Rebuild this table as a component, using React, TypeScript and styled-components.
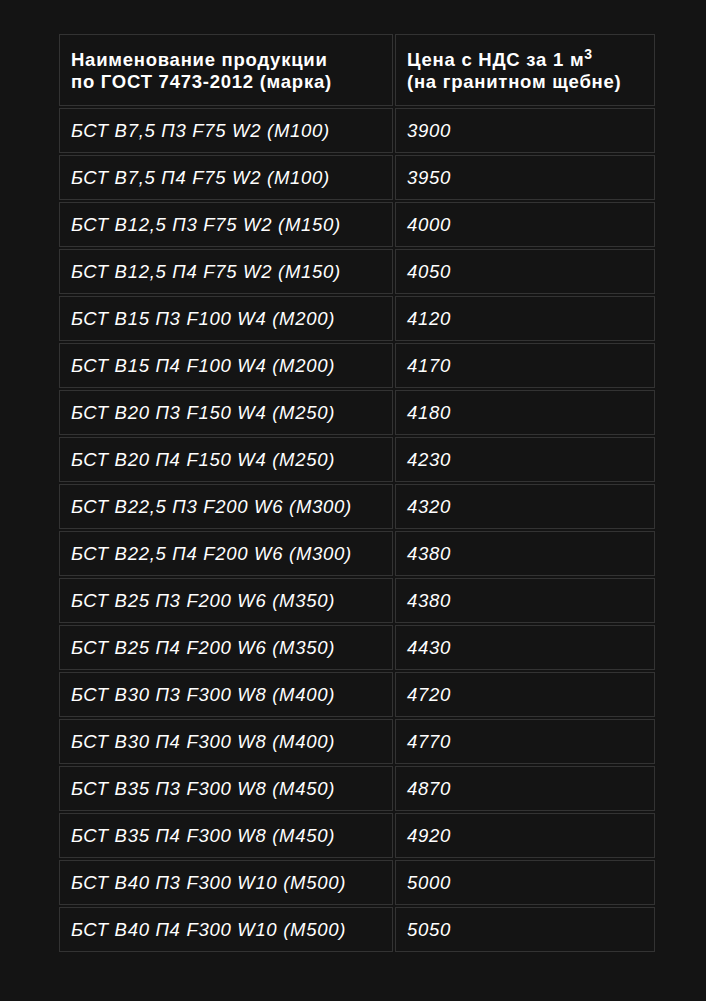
import React from "react";
import styled, { createGlobalStyle } from "styled-components";

const Global = createGlobalStyle`
  html, body { margin: 0; padding: 0; background: #141414; }
  body { font-family: "Liberation Sans", Arial, sans-serif; color: #fff; }
`;

const Page = styled.div`
  min-height: 1001px;
  padding: 32px 0 0 57px;
  box-sizing: border-box;
`;

const Table = styled.table`
  border-collapse: separate;
  border-spacing: 2px;
  width: 600px;
  table-layout: fixed;
`;

const HeadCell = styled.th<{ $w: number }>`
  width: ${(p) => p.$w}px;
  border: 1px solid #333;
  padding: 14px 11px 12px 11px;
  text-align: left;
  vertical-align: middle;
  font-size: 18.5px;
  letter-spacing: 0.75px;
  line-height: 22px;
  font-weight: 700;
  box-sizing: border-box;
  height: 72px;
`;

const Cell = styled.td`
  border: 1px solid #333;
  padding: 1px 11px 0;
  height: 45px;
  box-sizing: border-box;
  font-size: 18.5px;
  letter-spacing: 0.7px;
  line-height: 22px;
  font-style: italic;
  vertical-align: middle;
`;

const Sup = styled.sup`
  font-size: 14px;
  line-height: 0;
  letter-spacing: 0;
`;

const rows: [string, string][] = [
  ["БСТ В7,5 П3 F75 W2 (М100)", "3900"],
  ["БСТ В7,5 П4 F75 W2 (М100)", "3950"],
  ["БСТ В12,5 П3 F75 W2 (М150)", "4000"],
  ["БСТ В12,5 П4 F75 W2 (М150)", "4050"],
  ["БСТ В15 П3 F100 W4 (М200)", "4120"],
  ["БСТ В15 П4 F100 W4 (М200)", "4170"],
  ["БСТ В20 П3 F150 W4 (М250)", "4180"],
  ["БСТ В20 П4 F150 W4 (М250)", "4230"],
  ["БСТ В22,5 П3 F200 W6 (М300)", "4320"],
  ["БСТ В22,5 П4 F200 W6 (М300)", "4380"],
  ["БСТ В25 П3 F200 W6 (М350)", "4380"],
  ["БСТ В25 П4 F200 W6 (М350)", "4430"],
  ["БСТ В30 П3 F300 W8 (М400)", "4720"],
  ["БСТ В30 П4 F300 W8 (М400)", "4770"],
  ["БСТ В35 П3 F300 W8 (М450)", "4870"],
  ["БСТ В35 П4 F300 W8 (М450)", "4920"],
  ["БСТ В40 П3 F300 W10 (М500)", "5000"],
  ["БСТ В40 П4 F300 W10 (М500)", "5050"],
];

export default function App() {
  return (
    <>
      <Global />
      <Page>
        <Table>
          <thead>
            <tr>
              <HeadCell $w={334}>
                Наименование продукции
                <br />
                по ГОСТ 7473-2012 (марка)
              </HeadCell>
              <HeadCell $w={260}>
                Цена с НДС за 1 м<Sup>3</Sup>
                <br />
                (на гранитном щебне)
              </HeadCell>
            </tr>
          </thead>
          <tbody>
            {rows.map(([name, price]) => (
              <tr key={name}>
                <Cell>{name}</Cell>
                <Cell>{price}</Cell>
              </tr>
            ))}
          </tbody>
        </Table>
      </Page>
    </>
  );
}
